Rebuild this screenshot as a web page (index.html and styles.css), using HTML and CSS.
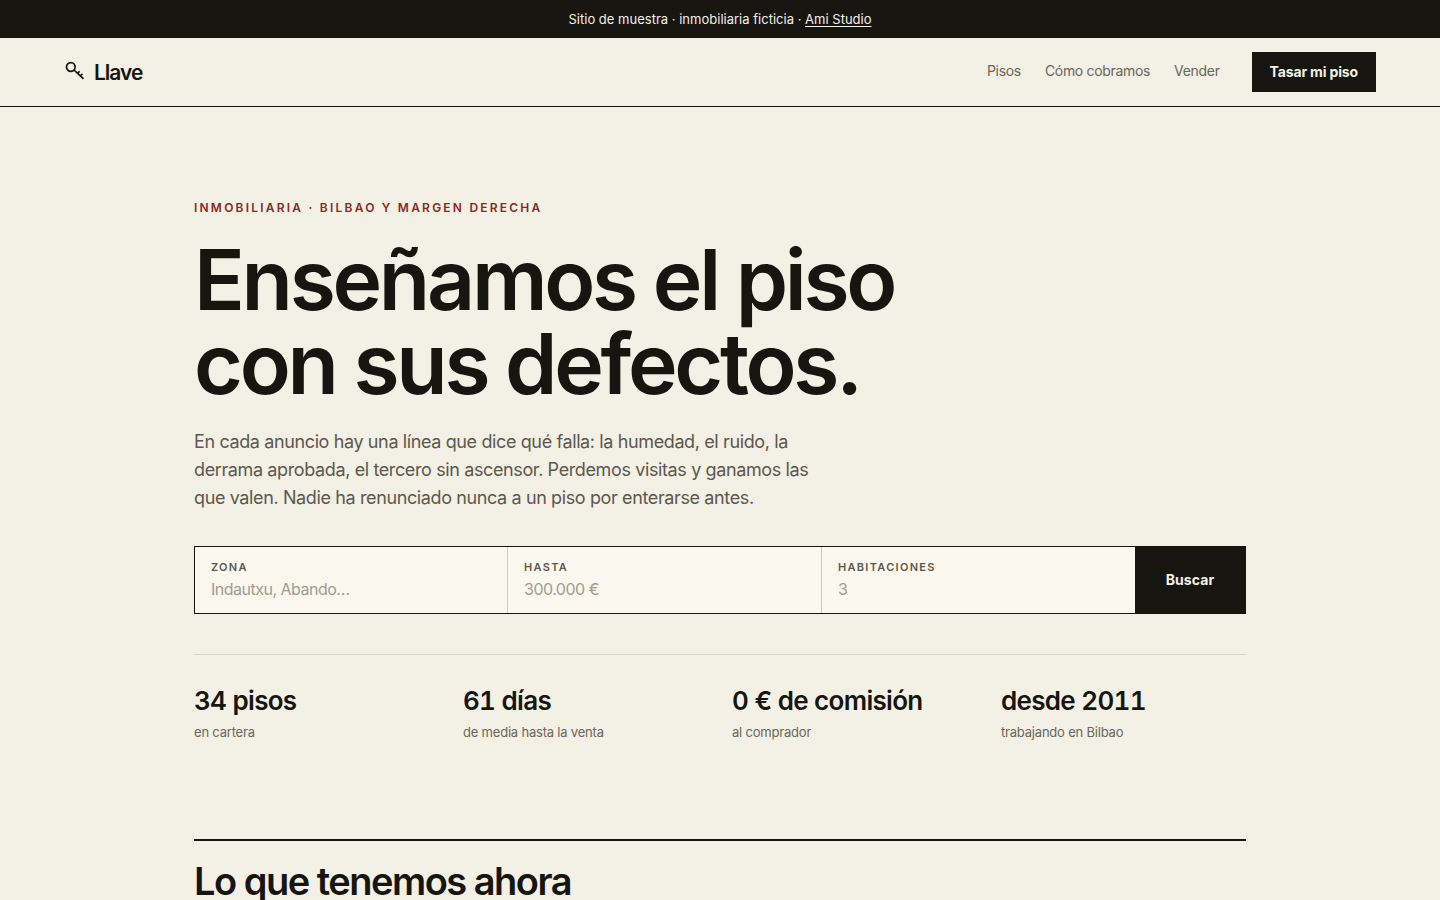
FILE: index.html
```html
<!DOCTYPE html>
<html lang="es">
<head>
<meta charset="utf-8">
<title>Llave</title>
<link rel="stylesheet" href="styles.css">
</head>
<body>
<div class="notice"><p>Sitio de muestra · inmobiliaria ficticia · <a href="#">Ami Studio</a></p></div>
<header class="site-header">
  <a class="logo" href="#">
    <svg class="logo-icon" viewBox="0 0 20 20" width="20" height="20" fill="none" stroke="#17150f" stroke-width="1.7"><circle cx="6.8" cy="6" r="4.3"/><path d="M10 9l9.5 8.8M13.6 12.4l2-2.2M16.4 15l2-2.2"/></svg>
    <span>Llave</span>
  </a>
  <nav class="nav">
    <a class="nav-link" href="#">Pisos</a>
    <a class="nav-link" href="#">Cómo cobramos</a>
    <a class="nav-link" href="#">Vender</a>
    <a class="cta" href="#">Tasar mi piso</a>
  </nav>
</header>
<main class="wrap">
  <section class="hero">
    <p class="eyebrow">INMOBILIARIA · BILBAO Y MARGEN DERECHA</p>
    <h1>Enseñamos el piso<br>con sus defectos.</h1>
    <p class="lead">En cada anuncio hay una línea que dice qué falla: la humedad, el ruido, la derrama aprobada, el tercero sin ascensor. Perdemos visitas y ganamos las que valen. Nadie ha renunciado nunca a un piso por enterarse antes.</p>
    <form class="search">
      <label class="field"><span>ZONA</span><input type="text" placeholder="Indautxu, Abando…"></label>
      <label class="field"><span>HASTA</span><input type="text" placeholder="300.000 €"></label>
      <label class="field"><span>HABITACIONES</span><input type="text" placeholder="3"></label>
      <button type="button">Buscar</button>
    </form>
    <dl class="stats">
      <div><dt>34 pisos</dt><dd>en cartera</dd></div>
      <div><dt>61 días</dt><dd>de media hasta la venta</dd></div>
      <div><dt>0 € de comisión</dt><dd>al comprador</dd></div>
      <div><dt>desde 2011</dt><dd>trabajando en Bilbao</dd></div>
    </dl>
  </section>
  <section class="listing">
    <h2>Lo que tenemos ahora</h2>
  </section>
</main>
</body>
</html>
```
FILE: styles.css
```css
* { box-sizing: border-box; }
html, body { height: 100%; }
body {
  margin: 0;
  height: 900px;
  overflow: hidden;
  background: #f3f0e6;
  color: #17150f;
  font-family: Inter, "Noto Sans", sans-serif;
}
a { color: inherit; text-decoration: none; }

.notice {
  height: 38px;
  display: flex;
  align-items: center;
  justify-content: center;
  background: #17150f;
  color: #f3f0e6;
  font-size: 13px;
  letter-spacing: 0.01px;
}
.notice p { margin: 0; }
.notice a { text-decoration: underline; text-underline-offset: 2px; }

.site-header {
  height: 69px;
  padding: 0 64px;
  display: flex;
  align-items: center;
  justify-content: space-between;
  border-bottom: 1px solid #17150f;
}
.logo { display: flex; align-items: center; gap: 10px; font-size: 21px; font-weight: 600; letter-spacing: -1px; }
.logo-icon { display: block; margin-top: -2px; }
.nav { display: flex; align-items: center; gap: 24px; font-size: 14px; color: #6a665a; letter-spacing: -0.32px; }
.nav-link { margin-bottom: 3px; }
.cta {
  margin-left: 8px;
  padding: 0 18px 1px;
  height: 40px;
  display: flex;
  align-items: center;
  background: #17150f;
  color: #f3f0e6;
  font-weight: 700;
  letter-spacing: -0.15px;
}

.wrap { width: 1052px; margin: 0 auto; }
.hero { padding-top: 93px; }
.eyebrow {
  margin: 0 0 23px;
  font-size: 12px;
  line-height: 15px;
  font-weight: 600;
  letter-spacing: 2.22px;
  color: #8a2a1c;
}
h1 {
  margin: 0 0 22px;
  font-size: 84px;
  line-height: 84px;
  font-weight: 600;
  letter-spacing: -3.3px;
}
.lead {
  margin: 0 0 34px;
  width: 640px;
  font-size: 18px;
  line-height: 28px;
  color: #5c584c;
  letter-spacing: -0.38px;
}

.search {
  display: grid;
  grid-template-columns: 313px 314px 313px 110px;
  height: 68px;
  background: #fbf8f0;
  border: 1px solid #17150f;
}
.field {
  padding: 13px 16px 0;
  display: flex;
  flex-direction: column;
  gap: 4px;
  min-width: 0;
  border-right: 1px solid #cfcbbd;
}
.field:nth-child(3) { border-right: 0; }
.field span {
  font-size: 11px;
  line-height: 14px;
  font-weight: 600;
  letter-spacing: 1.3px;
  color: #5c584c;
}
.field input {
  border: 0;
  padding: 0;
  margin: 0;
  outline: 0;
  background: transparent;
  font: inherit;
  font-size: 16px;
  line-height: 22px;
  letter-spacing: -0.5px;
  color: #17150f;
}
.field input::placeholder { color: #a09c8e; opacity: 1; }
.search button {
  border: 0;
  padding: 0 0 2px;
  background: #17150f;
  color: #f3f0e6;
  font: inherit;
  font-size: 14px;
  font-weight: 700;
  letter-spacing: 0.1px;
}

.stats {
  margin: 40px 0 0;
  padding-top: 30px;
  border-top: 1px solid #d9d5c8;
  display: grid;
  grid-template-columns: repeat(4, 1fr);
  gap: 24px;
}
.stats dt { font-size: 26px; line-height: 32px; font-weight: 600; letter-spacing: -0.7px; font-variant-numeric: tabular-nums; }
.stats dd { margin: 6px 0 0; font-size: 13px; line-height: 18px; color: #6a665a; letter-spacing: -0.2px; }

.listing {
  margin-top: 98px;
  border-top: 2px solid #17150f;
  padding-top: 18px;
}
h2 {
  margin: 0;
  font-size: 38px;
  line-height: 44px;
  font-weight: 600;
  letter-spacing: -1.5px;
}
```
